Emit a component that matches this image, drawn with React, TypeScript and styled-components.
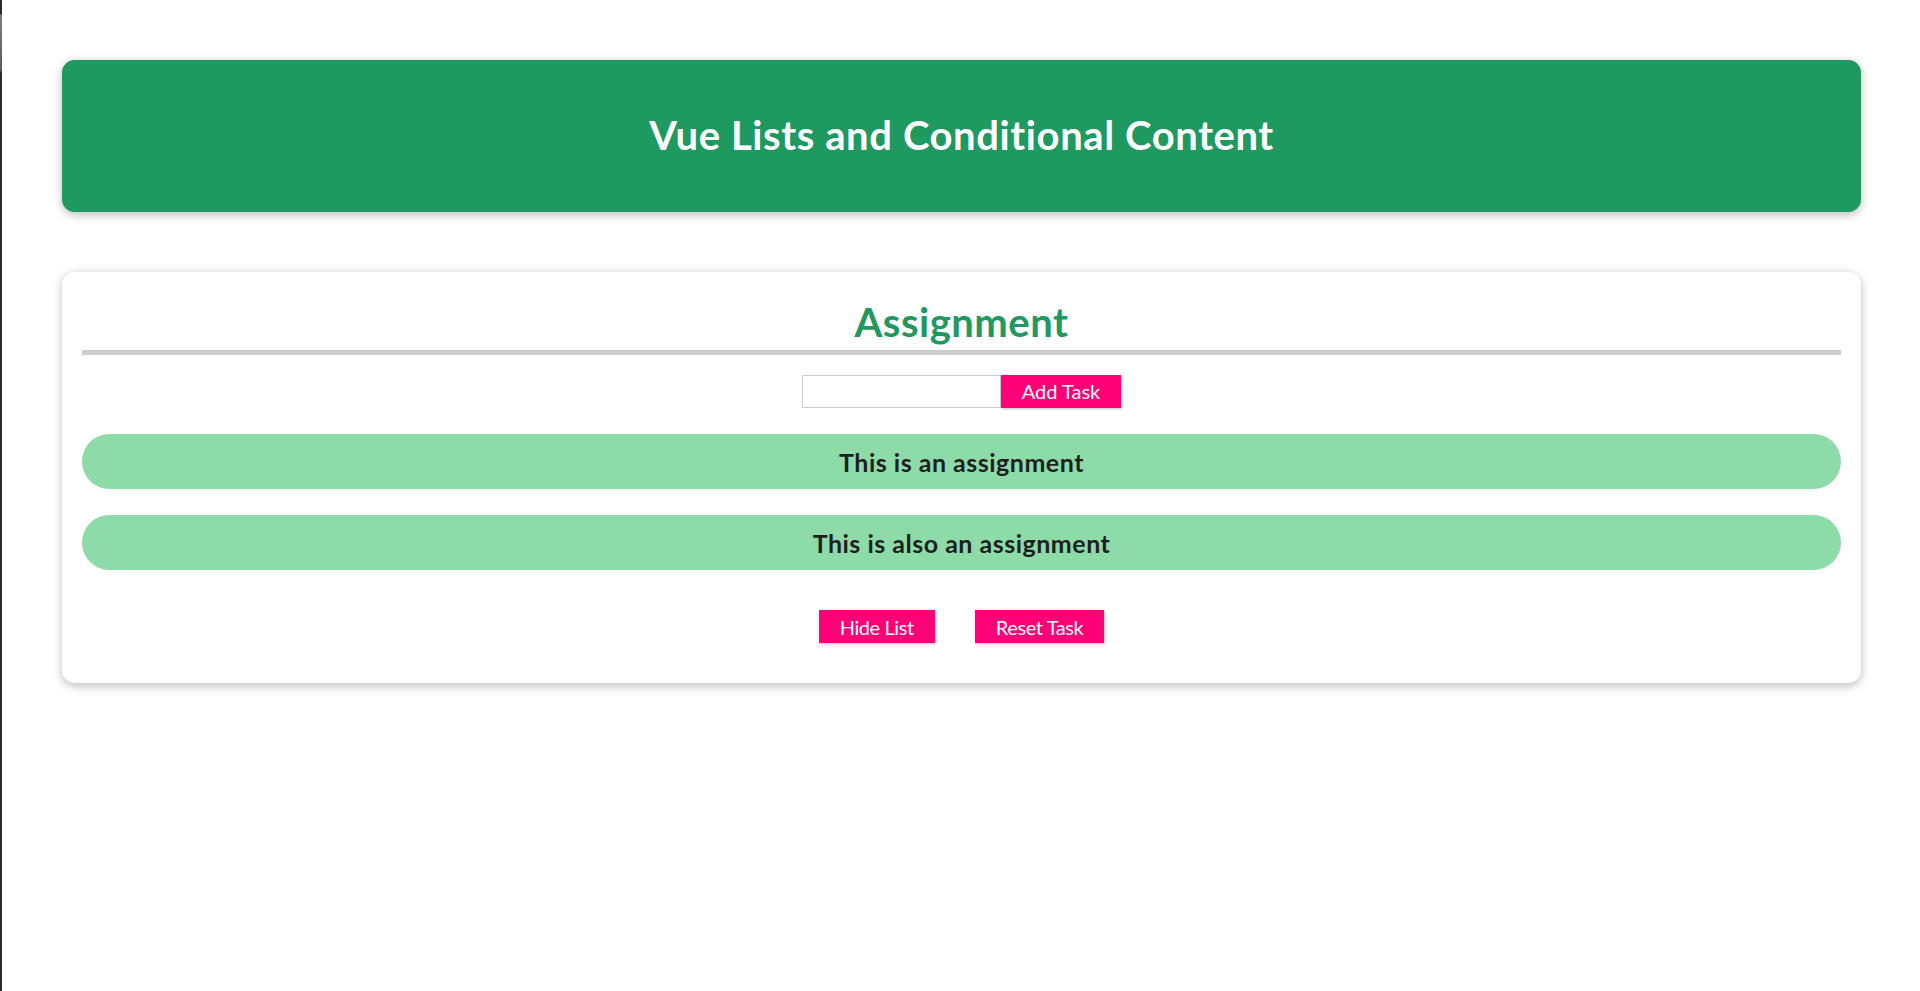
import React, { useState } from "react";
import styled, { createGlobalStyle } from "styled-components";

const GlobalStyle = createGlobalStyle`
  * { box-sizing: border-box; }
  html { font-family: Lato, "Open Sans", sans-serif; background: #ffffff; }
  body {
    margin: 0;
    min-height: 100vh;
    border-left: 2px solid #2c2c2c;
    border-image: linear-gradient(to bottom, #2b2b2b 0px, #2b2b2b 15px, #808080 16px, #5a5a5a 72px, #2b2b2b 73px, #2b2b2b 100%) 1;
  }
`;

const Header = styled.header`
  margin: 60px 59px 60px 60px;
  padding: 20px;
  border-radius: 12.5px;
  background-color: #1e9960;
  color: #ffffff;
  text-align: center;
  box-shadow: 0 2.5px 10px rgba(0, 0, 0, 0.26);
`;

const Heading = styled.h1`
  margin: 27.4px 0 26.8px;
  font-size: 40px;
  font-weight: 700;
  line-height: 57.8px;
  letter-spacing: 0.6px;
`;

const Card = styled.section`
  margin: 60px 59px 60px 60px;
  padding: 20px;
  border-radius: 12.5px;
  background: #ffffff;
  text-align: center;
  box-shadow: 0 2.5px 10px rgba(0, 0, 0, 0.26);
`;

const Title = styled.h2`
  margin: 0 0 20px;
  padding-top: 3px;
  font-size: 40px;
  font-weight: 700;
  line-height: 54.8px;
  letter-spacing: 0.5px;
  color: #1e9960;
  border-bottom: 5px solid #cccccc;
`;

const InputRow = styled.div`
  display: flex;
  justify-content: center;
  align-items: stretch;
  margin-bottom: 26px;
`;

const TaskInput = styled.input`
  width: 199px;
  height: 33px;
  padding: 1px 2px;
  font: inherit;
  font-size: 20px;
  border: 1px solid #cccccc;
  background: #ffffff;
  &:focus {
    outline: none;
    border-color: #1b995e;
    background-color: #d7fdeb;
  }
`;

const PinkButton = styled.button<{ $tight?: boolean }>`
  height: 33px;
  padding: 1px 20px;
  font-family: inherit;
  font-size: 20px;
  line-height: 28.9px;
  letter-spacing: ${(p) => (p.$tight ? "-0.4px" : "0")};
  color: #ffffff;
  background-color: #ff0077;
  border: 1px solid #ff0077;
  box-shadow: 1.25px 1.25px 2.5px rgba(0, 0, 0, 0.26);
  cursor: pointer;
  white-space: nowrap;
`;

const List = styled.ul`
  list-style: none;
  margin: 0;
  padding: 0;
  display: flex;
  flex-direction: column;
  gap: 25.3px;
`;

const Item = styled.li`
  padding: 11px 10px 9px;
  font-size: 25px;
  font-weight: 700;
  line-height: 35.7px;
  letter-spacing: 0.5px;
  color: #1f1f1f;
  background-color: #8ddba8;
  border-radius: 31.25px;
`;

const ButtonRow = styled.div`
  display: flex;
  justify-content: center;
  gap: 40px;
  margin-top: 40px;
  padding-bottom: 20px;
`;

export default function App() {
  const [tasks, setTasks] = useState<string[]>([
    "This is an assignment",
    "This is also an assignment",
  ]);
  const [text, setText] = useState("");
  const [visible, setVisible] = useState(true);

  return (
    <>
      <GlobalStyle />
      <Header>
        <Heading>Vue Lists and Conditional Content</Heading>
      </Header>
      <Card>
        <Title>Assignment</Title>
        <InputRow>
          <TaskInput
            type="text"
            value={text}
            onChange={(e) => setText(e.target.value)}
          />
          <PinkButton
            onClick={() => {
              if (text.trim()) setTasks([...tasks, text.trim()]);
              setText("");
            }}
          >
            Add Task
          </PinkButton>
        </InputRow>
        {visible && (
          <List>
            {tasks.map((t) => (
              <Item key={t}>{t}</Item>
            ))}
          </List>
        )}
        <ButtonRow>
          <PinkButton $tight onClick={() => setVisible(!visible)}>
            {visible ? "Hide List" : "Show List"}
          </PinkButton>
          <PinkButton $tight onClick={() => setTasks([])}>
            Reset Task
          </PinkButton>
        </ButtonRow>
      </Card>
    </>
  );
}
